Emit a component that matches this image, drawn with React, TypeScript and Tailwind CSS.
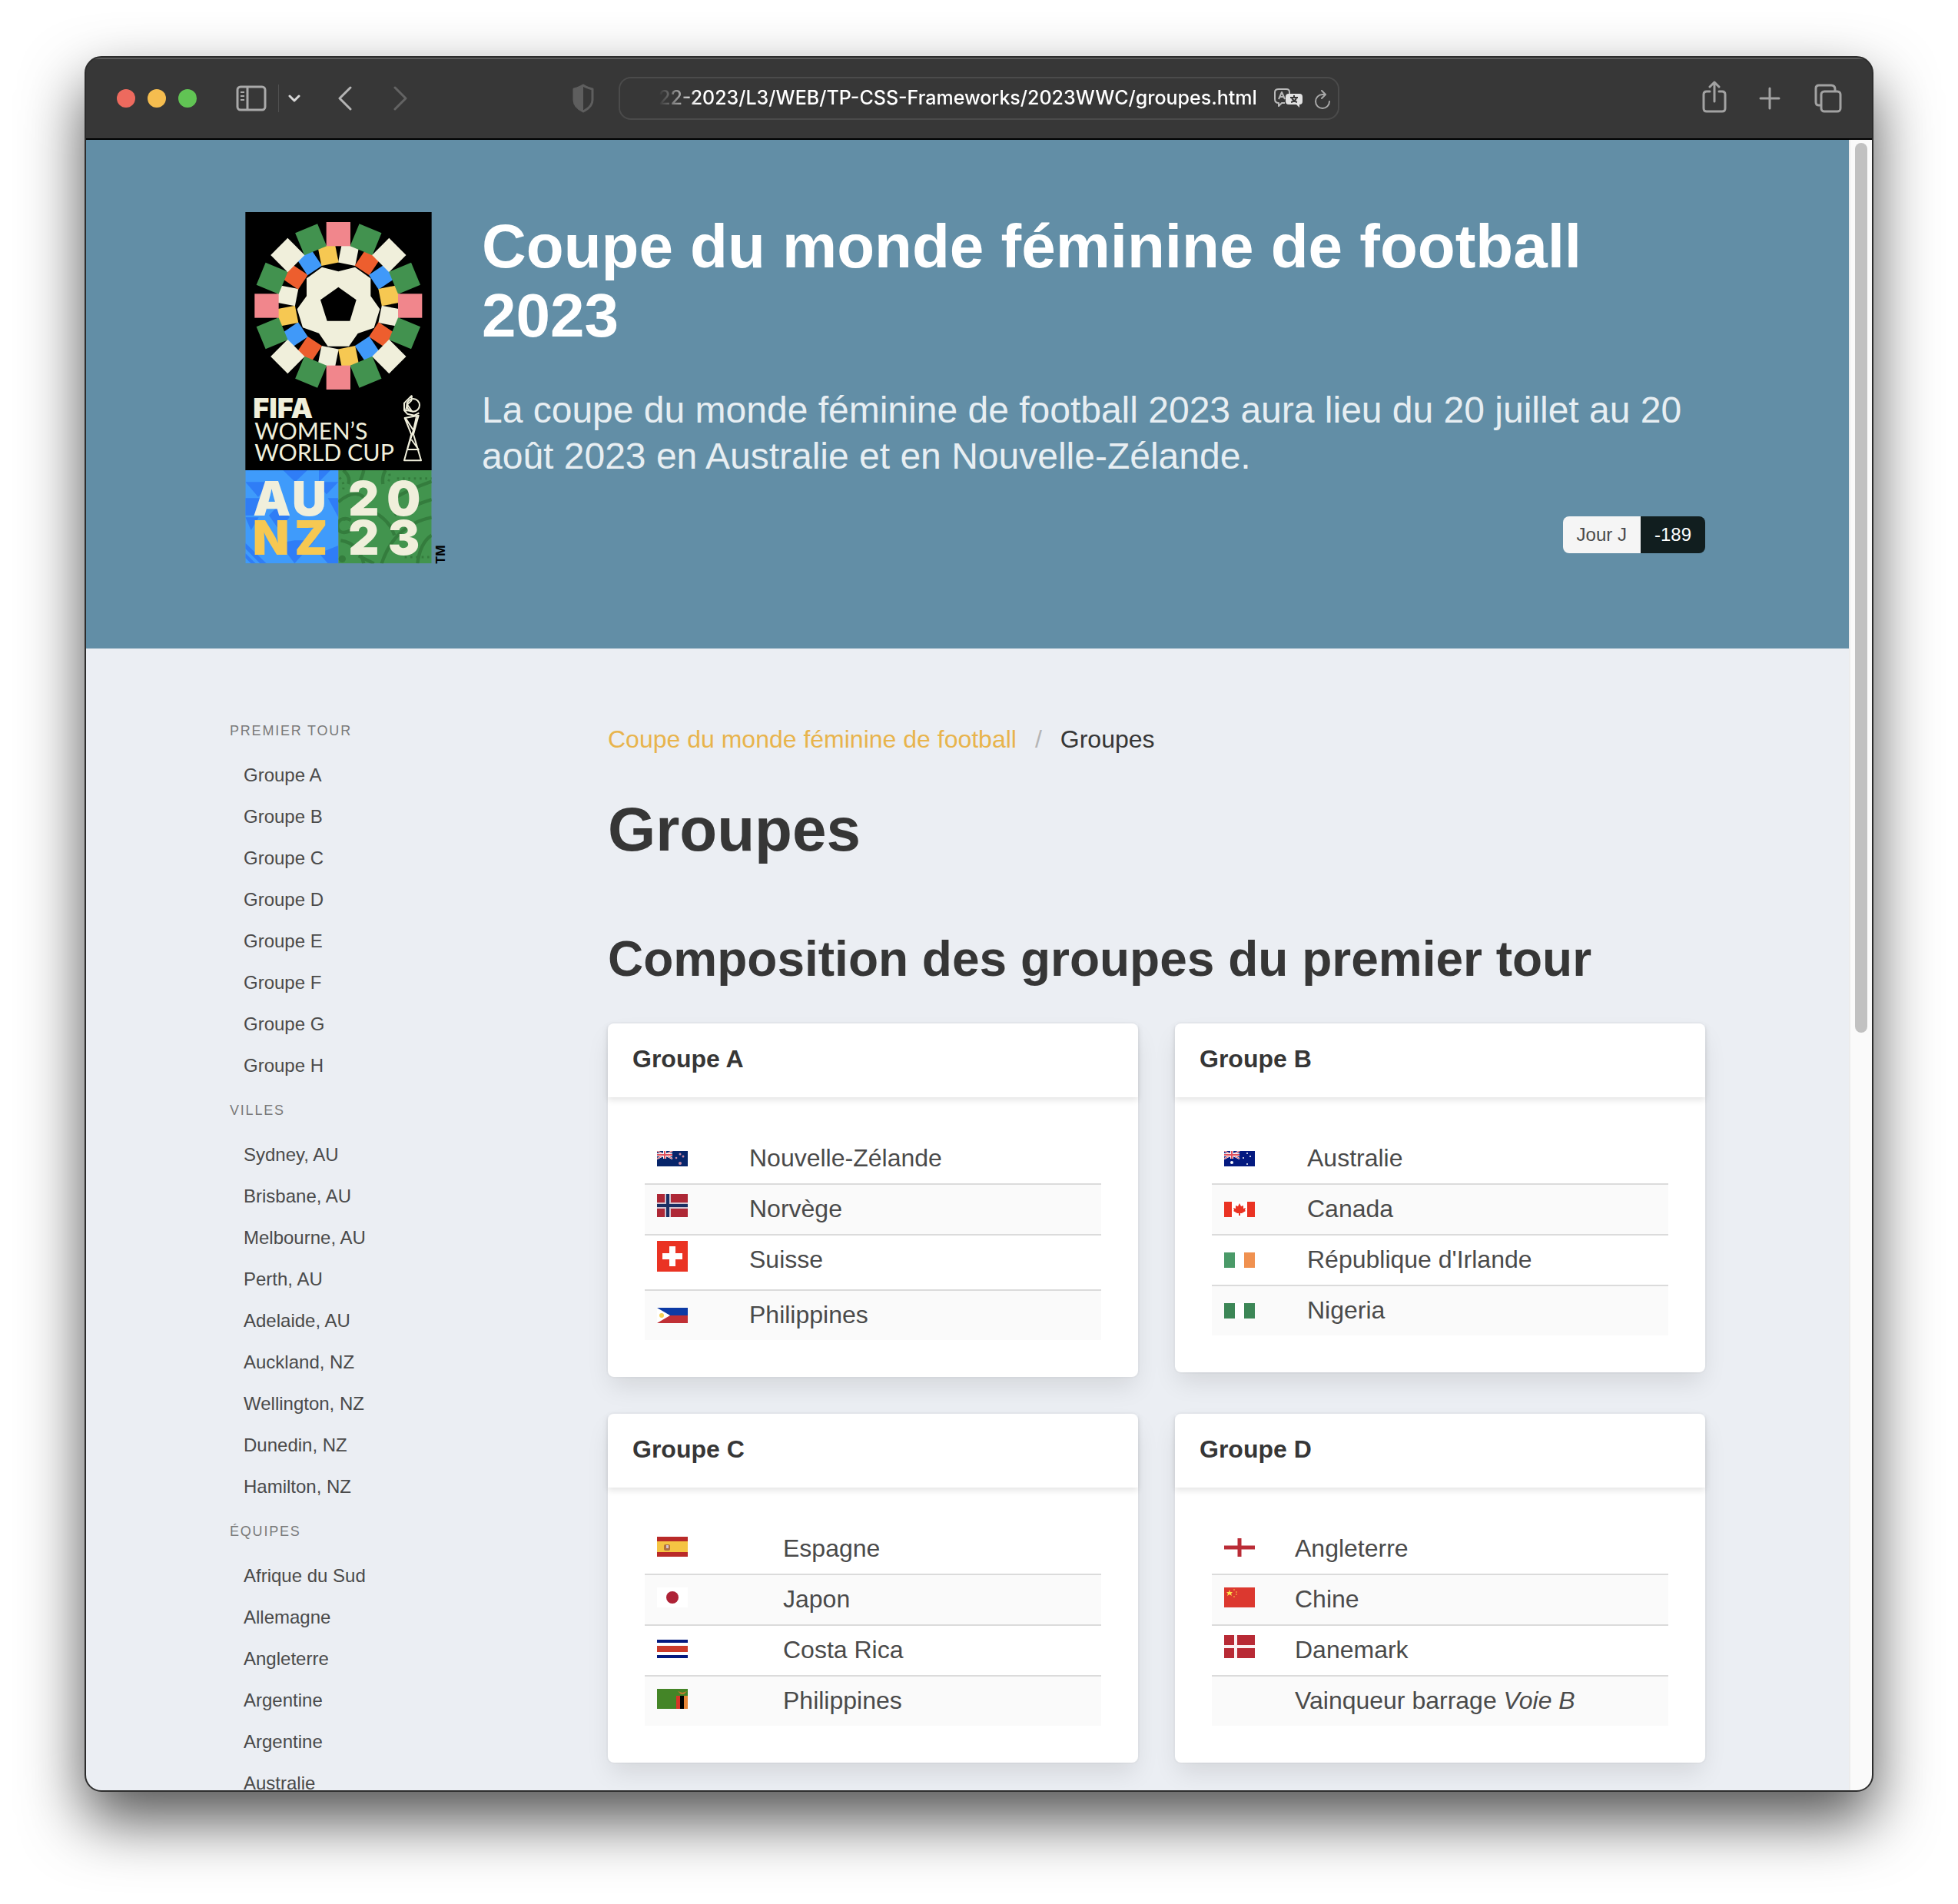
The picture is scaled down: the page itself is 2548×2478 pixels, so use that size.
import React from "react";

const CREAM = "#f0efdb";
const OUTER = ["#f1868c", "#42924f", CREAM, "#42924f"];
const INNER = [CREAM, "#ed5e2e", "#4099f9", "#f6c852"];

function Logo() {
  return (
    <svg viewBox="-3 48 840 1374" className="block w-full overflow-visible" role="img" aria-label="FIFA Women's World Cup AU NZ 2023">
      <defs>
        <clipPath id="blueTile"><rect x="58" y="1056" width="363" height="364" /></clipPath>
        <clipPath id="greenTile"><rect x="421" y="1056" width="364" height="364" /></clipPath>
      </defs>
      <rect x="58" y="48" width="727" height="1008" fill="#000" />
      {Array.from({ length: 16 }, (_, i) => (
        <rect key={i} x="387" y="172" width="68" height="76" fill={INNER[i % 4]} transform={`rotate(${i * 22.5 + 11.25} 421 414)`} />
      ))}
      {Array.from({ length: 16 }, (_, i) => (
        <rect key={i} x="374" y="87" width="94" height="94" fill={OUTER[i % 4]} transform={`rotate(${i * 22.5} 421 414)`} />
      ))}
      <path fill={CREAM} d="M357 263 421 280 486 263 547 307V376L583 427 560 500 497 522 462 572H380L345 521 282 499 260 427 297 376V307Z" />
      <path fill="#000" d="M421 341 491 391 466 473H377L351 391Z" />

      <g fill={CREAM}>
        <text x="88" y="852" fontFamily="Inter, sans-serif" fontWeight="900" fontSize="108">FIFA</text>
        <text x="94" y="935" fontFamily="Lato, sans-serif" fontWeight="400" fontSize="91">WOMEN’S</text>
        <text x="94" y="1020" fontFamily="Lato, sans-serif" fontWeight="400" fontSize="91">WORLD CUP</text>
      </g>
      <g fill="none" stroke={CREAM} strokeWidth="6" strokeLinejoin="round">
        <circle cx="713" cy="802" r="25" />
        <path d="M708 764 678 794V822L690 836 718 842 736 832M708 764 706 784 690 800 684 822 712 826M690 800 706 822" />
        <path d="M680 852 734 842 714 916 744 1018H678L706 916ZM684 854 714 900 726 846M706 936 734 975H690L714 900" />
      </g>

      <g clipPath="url(#blueTile)">
        <rect x="58" y="1056" width="363" height="364" fill="#3f9bfb" />
        <g fill="#2f7df6">
          <path d="M205 1056H300L252 1102ZM300 1056H390L345 1102V1056ZM58 1102H160L108 1160ZM58 1165H130L90 1232H58ZM150 1232 190 1190 230 1240 190 1290ZM190 1340 250 1420 330 1330H250ZM330 1102H421L375 1150ZM345 1380 421 1350V1420H380ZM58 1240H110L80 1290ZM380 1165H421V1240ZM58 1340 140 1420H115L58 1362ZM58 1380 98 1420H80L58 1398Z" />
        </g>
      </g>
      <g clipPath="url(#greenTile)">
        <rect x="421" y="1056" width="364" height="364" fill="#42944e" />
        <g fill="none" stroke="#347c3d" strokeWidth="13">
          <path d="M440 1056Q470 1080 460 1110M520 1056Q515 1080 500 1110M605 1056Q590 1080 595 1110M785 1100Q700 1130 640 1165M785 1170Q720 1190 640 1230M785 1240Q640 1270 590 1420M470 1250C400 1220 400 1330 470 1290M500 1390Q540 1410 560 1420M421 1180Q480 1130 520 1160M560 1220Q620 1250 640 1310M785 1310Q740 1340 730 1420M430 1330Q500 1340 520 1420" />
          <path strokeDasharray="8 14" strokeWidth="9" d="M425 1085Q445 1100 440 1130M620 1070Q625 1090 610 1110M650 1088H785M440 1250Q475 1240 478 1275M680 1395H785" />
        </g>
        <circle cx="436" cy="1402" r="14" fill="#347c3d" />
      </g>
      <g fontFamily="Inter, sans-serif" fontWeight="900" fontSize="186" fill={CREAM}>
        <text x="88 240" y="1232">AU</text>
        <text x="86 250" y="1385" fill="#f6c852">NZ</text>
        <text x="460 610" y="1232">20</text>
        <text x="460 614" y="1385">23</text>
      </g>
      <text transform="translate(838 1422) rotate(-90)" fontFamily="Inter, sans-serif" fontWeight="700" fontSize="46" fill="#000">TM</text>
    </svg>
  );
}

type FlagProps = { code: string };

function UnionJack() {
  return (
    <g>
      <path d="M0 0 20 10M20 0 0 10" stroke="#fff" strokeWidth="2" />
      <path d="M0 0 20 10M20 0 0 10" stroke="#e0505c" strokeWidth="1" />
      <path d="M10 0V10M0 5H20" stroke="#fff" strokeWidth="4" />
      <path d="M10 0V10M0 5H20" stroke="#e0505c" strokeWidth="2" />
    </g>
  );
}

const FLAGS: Record<string, { h: number; art: React.ReactNode }> = {
  nz: { h: 20, art: <><rect width="40" height="20" fill="#07256a" /><UnionJack /><g fill="#c98aa5"><circle cx="30" cy="4" r="1.5" /><circle cx="25" cy="9" r="1.3" /><circle cx="34" cy="7" r="1.5" /><circle cx="30" cy="16" r="2" /></g></> },
  no: { h: 30, art: <><rect width="40" height="30" fill="#ae2836" /><path d="M14 0V30M0 15H40" stroke="#d3c4d0" strokeWidth="8" /><path d="M14 0V30M0 15H40" stroke="#1b2f63" strokeWidth="4" /></> },
  ch: { h: 40, art: <><rect width="40" height="40" fill="#ea3323" /><path d="M20 7V33M7 20H33" stroke="#fff" strokeWidth="8" /></> },
  ph: { h: 20, art: <><rect width="40" height="10" fill="#0c3aa5" /><rect y="10" width="40" height="10" fill="#c02f35" /><path d="M0 0 17 10 0 20Z" fill="#fff" /><circle cx="6" cy="10" r="3" fill="#f6d155" /></> },
  au: { h: 20, art: <><rect width="40" height="20" fill="#041a80" /><UnionJack /><g fill="#fff"><circle cx="10" cy="15" r="2" /><circle cx="30" cy="3" r="1" /><circle cx="25" cy="9" r="1" /><circle cx="34" cy="7" r="1" /><circle cx="30" cy="17" r="1" /></g></> },
  ca: { h: 20, art: <><rect width="40" height="20" fill="#fff" /><path d="M0 0H10V20H0ZM30 0H40V20H30Z" fill="#ea3323" /><path d="M20 2 22 6 25 5 25 9 28 8 27 11 28 12 23 15H21V18H19V15H17L12 12 13 11 12 8 15 9 15 5 18 6Z" fill="#ea3323" /></> },
  ie: { h: 20, art: <><rect width="40" height="20" fill="#fff" /><rect width="14" height="20" fill="#4a9a68" /><rect x="26" width="14" height="20" fill="#f09150" /></> },
  ng: { h: 20, art: <><rect width="40" height="20" fill="#fff" /><rect width="14" height="20" fill="#3c8656" /><rect x="26" width="14" height="20" fill="#3c8656" /></> },
  es: { h: 26, art: <><rect width="40" height="26" fill="#b92a28" /><rect y="6" width="40" height="14" fill="#f5c443" /><rect x="9" y="10" width="8" height="8" rx="2" fill="#b0703f" /><rect x="12" y="11" width="3" height="4" fill="#d6c2cf" /></> },
  jp: { h: 26, art: <><rect width="40" height="26" fill="#fff" /><circle cx="20" cy="13" r="8" fill="#ae2236" /></> },
  cr: { h: 24, art: <><rect width="40" height="24" fill="#041a80" /><rect y="4" width="40" height="16" fill="#fff" /><rect y="8" width="40" height="8" fill="#cb3b2b" /></> },
  zm: { h: 26, art: <><rect width="40" height="26" fill="#448527" /><rect x="25" y="9" width="5" height="17" fill="#d83527" /><rect x="30" y="9" width="5" height="17" fill="#000" /><rect x="35" y="9" width="5" height="17" fill="#e58435" /><path d="M27 3 33 5 39 3 35 7H31Z" fill="#c1792c" /></> },
  en: { h: 24, art: <><rect width="40" height="24" fill="#fff" /><path d="M20 0V24M0 12H40" stroke="#ba2c36" strokeWidth="5" /></> },
  cn: { h: 26, art: <><rect width="40" height="26" fill="#dc382f" /><path d="M7 3 8 6H11L9 8 10 11 7 9 4 11 5 8 3 6H6Z" fill="#fbe34c" /><g fill="#ee9a3d"><circle cx="13" cy="3" r="1" /><circle cx="16" cy="6" r="1" /><circle cx="16" cy="9" r="1" /><circle cx="13" cy="12" r="1" /></g></> },
  dk: { h: 30, art: <><rect width="40" height="30" fill="#b82a35" /><path d="M15 0V30M0 15H40" stroke="#fbeff1" strokeWidth="4" /></> },
};

function Flag({ code }: FlagProps) {
  const { h, art } = FLAGS[code];
  return (
    <svg width="40" height={h} viewBox={`0 0 40 ${h}`} className="inline-block align-baseline" aria-hidden="true">
      {art}
    </svg>
  );
}

type Team = { code?: string; name: React.ReactNode };
type Group = { title: string; col: string; teams: Team[] };

const GROUPS: Group[] = [
  { title: "Groupe A", col: "w-[120px]", teams: [{ code: "nz", name: "Nouvelle-Zélande" }, { code: "no", name: "Norvège" }, { code: "ch", name: "Suisse" }, { code: "ph", name: "Philippines" }] },
  { title: "Groupe B", col: "w-[108px]", teams: [{ code: "au", name: "Australie" }, { code: "ca", name: "Canada" }, { code: "ie", name: "République d'Irlande" }, { code: "ng", name: "Nigeria" }] },
  { title: "Groupe C", col: "w-[164px]", teams: [{ code: "es", name: "Espagne" }, { code: "jp", name: "Japon" }, { code: "cr", name: "Costa Rica" }, { code: "zm", name: "Philippines" }] },
  { title: "Groupe D", col: "w-[92px]", teams: [{ code: "en", name: "Angleterre" }, { code: "cn", name: "Chine" }, { code: "dk", name: "Danemark" }, { name: <>Vainqueur barrage <em>Voie B</em></> }] },
];

function GroupCard({ title, col, teams }: Group) {
  return (
    <article className="rounded-lg bg-white shadow-[0_16px_32px_-4px_rgba(10,10,10,0.1),0_0_0_2px_rgba(10,10,10,0.02)]">
      <header className="px-8 pt-[22px] pb-[26px] shadow-[0_4px_8px_rgba(10,10,10,0.1)]">
        <h3 className="text-[32px] leading-[48px] font-bold text-[#363636]">{title}</h3>
      </header>
      <div className="p-12">
        <table className="w-full table-fixed border-separate border-spacing-0" aria-label={title}>
          <tbody>
            {teams.map((t, i) => (
              <tr key={i} className="group even:bg-[#fafafa]">
                <td className={`${col} ${t.code === "ch" ? "h-[72px]" : ""} border-b-2 border-[#dbdbdb] px-4 pt-[7px] pb-[9px] align-top leading-[48px] group-last:border-b-0`}>
                  {t.code && <Flag code={t.code} />}
                </td>
                <td className="border-b-2 border-[#dbdbdb] px-4 pt-[7px] pb-[9px] align-top leading-[48px] group-last:border-b-0">{t.name}</td>
              </tr>
            ))}
          </tbody>
        </table>
      </div>
    </article>
  );
}

const MENU = [
  { label: "Premier tour", items: ["Groupe A", "Groupe B", "Groupe C", "Groupe D", "Groupe E", "Groupe F", "Groupe G", "Groupe H"] },
  { label: "Villes", items: ["Sydney, AU", "Brisbane, AU", "Melbourne, AU", "Perth, AU", "Adelaide, AU", "Auckland, NZ", "Wellington, NZ", "Dunedin, NZ", "Hamilton, NZ"] },
  { label: "Équipes", items: ["Afrique du Sud", "Allemagne", "Angleterre", "Argentine", "Argentine", "Australie"] },
];

function SideMenu() {
  return (
    <nav className="flex flex-col gap-[18px]" aria-label="Menu">
      {MENU.map((s) => (
        <section key={s.label}>
          <h2 className="mb-[17px] text-[18px] leading-[27px] tracking-widest text-[#7a7a7a] uppercase">{s.label}</h2>
          <ul>
            {s.items.map((it, i) => (
              <li key={i}>
                <a href="#" className="block px-[18px] py-3 text-2xl leading-[30px] text-[#4a4a4a]">{it}</a>
              </li>
            ))}
          </ul>
        </section>
      ))}
    </nav>
  );
}

function Toolbar() {
  return (
    <header className="grid h-[107px] shrink-0 grid-cols-[1fr_auto_1fr] items-center border-b-2 border-black bg-[#373737] shadow-[inset_0_2px_0_#5c5c5c]">
      <div className="flex items-center pr-8 pl-10 text-[#a9a9a9]">
        <div className="flex gap-4">
          <button aria-label="Fermer" className="size-6 rounded-full bg-[#ed6a5e]" />
          <button aria-label="Réduire" className="size-6 rounded-full bg-[#f5bd4f]" />
          <button aria-label="Agrandir" className="size-6 rounded-full bg-[#61c454]" />
        </div>
        <button aria-label="Barre latérale" className="ml-[51px]">
          <svg width="40" height="34" viewBox="0 0 40 34" fill="none" stroke="currentColor" strokeWidth="3" className="block">
            <rect x="2" y="2" width="36" height="30" rx="4" />
            <path d="M15 2V32" />
            <path d="M6 9H11M6 14H11M6 19H11" strokeWidth="2" />
          </svg>
        </button>
        <span className="ml-[15px] h-9 w-px bg-[#505050]" />
        <button aria-label="Options" className="ml-3">
          <svg width="16" height="12" viewBox="0 0 16 12" fill="none" stroke="#d8d8d8" strokeWidth="3" strokeLinecap="round" strokeLinejoin="round" className="block"><path d="M2 3 8 9 14 3" /></svg>
        </button>
        <button aria-label="Précédent" className="ml-12">
          <svg width="20" height="32" viewBox="0 0 20 32" fill="none" stroke="#b4b4b4" strokeWidth="3" strokeLinecap="round" strokeLinejoin="round" className="block"><path d="M17 2 3 16 17 30" /></svg>
        </button>
        <button aria-label="Suivant" className="ml-[52px]">
          <svg width="20" height="32" viewBox="0 0 20 32" fill="none" stroke="#636363" strokeWidth="3" strokeLinecap="round" strokeLinejoin="round" className="block"><path d="M3 2 17 16 3 30" /></svg>
        </button>
        <button aria-label="Confidentialité" className="ml-auto">
          <svg width="28" height="38" viewBox="0 0 28 38" className="block">
            <path d="M14 2C18 5 22 6 26 7V21C26 28 20 33 14 36 8 33 2 28 2 21V7C6 6 10 5 14 2Z" fill="none" stroke="#5e5e5e" strokeWidth="3" strokeLinejoin="round" />
            <path d="M14 2V36C8 33 2 28 2 21V7C6 6 10 5 14 2Z" fill="#5e5e5e" />
          </svg>
        </button>
      </div>
      <div className="flex h-14 w-[938px] items-center rounded-2xl border-2 border-[#4b4b4b] pr-2 pl-[50px]">
        <input
          aria-label="Adresse"
          readOnly
          value="22-2023/L3/WEB/TP-CSS-Frameworks/2023WWC/groupes.html"
          className="min-w-0 flex-1 bg-transparent pt-px font-[Inter] text-[25px] font-medium text-white outline-none [mask-image:linear-gradient(to_right,transparent,black_52px)]"
        />
        <button aria-label="Traduire" className="ml-4">
          <svg width="40" height="28" viewBox="0 0 40 28" className="block" fill="none" strokeLinejoin="round">
            <path d="M7 2H17Q21 2 21 6V8M15 20H11L7 24V20Q2 20 2 15V6Q2 2 7 2" stroke="#b9b9b9" strokeWidth="2" />
            <path d="M7 15 11 6 15 15M8 12H14" stroke="#b9b9b9" strokeWidth="2" />
            <path d="M20 8H34Q38 8 38 12V18Q38 22 34 22V26L30 22H20Q16 22 16 18V12Q16 8 20 8Z" fill="#e2e2e2" />
            <path d="M27 10V12M22 13H32M24 14Q27 18 31 19M30 14Q28 18 23 19" stroke="#373737" strokeWidth="2" />
          </svg>
        </button>
        <button aria-label="Recharger" className="ml-3">
          <svg width="24" height="26" viewBox="0 0 24 26" fill="none" stroke="#a9a9a9" strokeWidth="2" strokeLinecap="round" strokeLinejoin="round" className="mt-1 block"><path d="M14 6H12A9 9 0 1 0 21 15M11 1 16 6 11 11" /></svg>
        </button>
      </div>
      <div className="flex items-center justify-end pr-[39px] text-[#a2a2a2]">
        <button aria-label="Partager">
          <svg width="32" height="42" viewBox="0 0 32 42" fill="none" stroke="currentColor" strokeWidth="3" strokeLinecap="round" strokeLinejoin="round" className="mb-1 block"><path d="M10 14H6Q2 14 2 18V36Q2 40 6 40H26Q30 40 30 36V18Q30 14 26 14H22M16 27V2M10 8 16 2 22 8" /></svg>
        </button>
        <button aria-label="Nouvel onglet" className="ml-[42px]">
          <svg width="28" height="30" viewBox="0 0 28 30" fill="none" stroke="currentColor" strokeWidth="3" strokeLinecap="round" className="block"><path d="M14 2V28M2 15H26" /></svg>
        </button>
        <button aria-label="Onglets" className="ml-11">
          <svg width="36" height="38" viewBox="0 0 36 38" fill="none" stroke="currentColor" strokeWidth="3" strokeLinejoin="round" className="block"><rect x="9" y="10" width="25" height="26" rx="4" /><path d="M9 28H6Q2 28 2 24V6Q2 2 6 2H22Q27 2 27 7V10" /></svg>
        </button>
      </div>
    </header>
  );
}

function Hero() {
  return (
    <section className="shrink-0 bg-[#628ea6] px-12 pt-[94px] pb-[110px]">
      <div className="mx-auto flex max-w-[1920px] items-start gap-12">
        <div className="w-[280px] shrink-0"><Logo /></div>
        <div className="min-w-0 flex-1">
          <h1 className="text-[80px] leading-[90px] font-bold text-white">Coupe du monde féminine de football 2023</h1>
          <p className="mt-12 text-5xl leading-[60px] text-white/85">La coupe du monde féminine de football 2023 aura lieu du 20 juillet au 20 août 2023 en Australie et en Nouvelle-Zélande.</p>
          <div className="mt-12 flex justify-end text-2xl leading-[48px]">
            <span className="rounded-l-lg bg-[#f5f5f5] px-[18px] text-[#4a4a4a]">Jour J</span>
            <span className="rounded-r-lg bg-[#111e1f] px-[18px] text-white">-189</span>
          </div>
        </div>
      </div>
    </section>
  );
}

export default function App() {
  return (
    <div className="h-screen bg-white px-[110px] pt-[73px] pb-[146px] font-['Liberation_Sans',Arial,sans-serif]">
      <div className="flex h-full flex-col overflow-hidden rounded-[22px] border-2 border-[#2c2c2c] bg-[#373737] shadow-[0_37px_80px_rgba(0,0,0,0.68)]">
        <Toolbar />
        <div className="flex min-h-0 flex-1">
          <div className="flex min-w-0 flex-1 flex-col overflow-hidden bg-[#ebeef3]">
            <Hero />
            <div className="shrink-0 px-12 pt-[94px] pb-24">
              <div className="mx-auto grid max-w-[1920px] grid-cols-[444px_1fr] gap-12 text-[32px] text-[#4a4a4a]">
                <SideMenu />
                <main>
                  <nav aria-label="Fil d'Ariane" className="flex gap-6 leading-[48px]">
                    <a href="#" className="text-[#e8b44c]">Coupe du monde féminine de football</a>
                    <span className="text-[#b5b5b5]" aria-hidden="true">/</span>
                    <a href="#" aria-current="page" className="text-[#363636]">Groupes</a>
                  </nav>
                  <h1 className="mt-[49px] text-[80px] leading-[90px] font-bold text-[#363636]">Groupes</h1>
                  <h2 className="mt-[87px] text-[64px] leading-[72px] font-bold text-[#363636]">Composition des groupes du premier tour</h2>
                  <div className="mt-12 grid grid-cols-2 items-start gap-12">
                    {GROUPS.map((g) => <GroupCard key={g.title} {...g} />)}
                  </div>
                </main>
              </div>
            </div>
          </div>
          <div className="w-[30px] shrink-0 border-l-2 border-[#ececec] bg-[#fafafa] px-[6px] pt-1">
            <div className="h-[54%] rounded-full bg-[#c1c1c1]" />
          </div>
        </div>
      </div>
    </div>
  );
}
